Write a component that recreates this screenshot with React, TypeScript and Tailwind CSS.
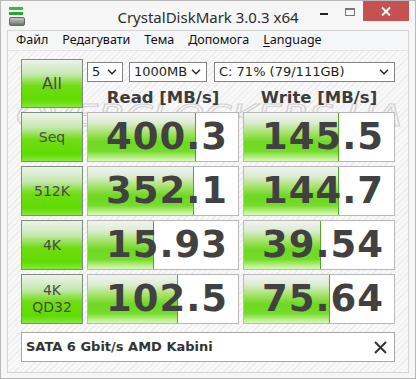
import React from 'react';

const rows = [
  { label: 'Seq', read: '400.3', readBar: 108, write: '145.5', writeBar: 95 },
  { label: '512K', read: '352.1', readBar: 106, write: '144.7', writeBar: 95 },
  { label: '4K', read: '15.93', readBar: 66, write: '39.54', writeBar: 77 },
  { label: '4K\nQD32', read: '102.5', readBar: 90, write: '75.64', writeBar: 86 },
];

const TestButton: React.FC<{ label: string; tall?: boolean }> = ({ label, tall }) => (
  <div
    className={`w-[62px] ${tall ? 'h-[49px] text-[16px]' : 'h-[50px] text-[14px]'} shrink-0 flex items-center justify-center border border-[#7e8e7c] bg-[linear-gradient(to_bottom,#eef2ec_0%,#c6e8b0_30%,#72dc14_55%,#5edc00_85%,#8ae640_100%)] text-[#4a4a4a] leading-[17px] text-center whitespace-pre-line font-['DejaVu_Sans',sans-serif]`}
  >
    {label}
  </div>
);

const ResultBox: React.FC<{ value: string; bar: number }> = ({ value, bar }) => (
  <div className="relative w-[152px] h-[50px] shrink-0 border border-[#b8b8b8] bg-white overflow-hidden">
    <div
      className="absolute left-0 top-0 bottom-0 border-r border-[#4fa82a] bg-[linear-gradient(to_bottom,#f2f3f1_0%,#dcecd2_20%,#a4e266_42%,#6ed822_60%,#74dc2a_80%,#b6ee82_92%,#d8f8bc_100%)]"
      style={{ width: bar }}
    />
    <div className="relative h-full flex items-center justify-end pr-[10px] text-[#414141] text-[37px] font-bold tracking-[1px] font-['DejaVu_Sans',sans-serif]">
      {value}
    </div>
  </div>
);

const Select: React.FC<{ value: string; width: string }> = ({ value, width }) => (
  <div className={`${width} h-[20px] shrink-0 border border-[#828282] bg-white flex items-center justify-between pl-[4px] pr-[5px] text-[13px] text-[#1e1e1e] font-['DejaVu_Sans',sans-serif]`}>
    <span>{value}</span>
    <svg width="10" height="6" viewBox="0 0 10 6" fill="none">
      <path d="M1 0.8 L5 4.8 L9 0.8" stroke="#222" strokeWidth="1.4" />
    </svg>
  </div>
);

export default function App() {
  return (
    <div className="w-[416px] h-[379px] bg-[#f6f6f6] border border-[#b9b9b9] flex flex-col font-['Noto_Sans',sans-serif] overflow-hidden">
      {/* title bar */}
      <div className="h-[29px] shrink-0 relative flex items-start">
        <div className="absolute left-[8px] top-[6px] w-[17px] h-[20px] flex flex-col gap-[2px]">
          <div className="h-[3px] w-[14px] bg-[#2fc23a]" />
          <div className="h-[3px] w-[14px] bg-[#28a832]" />
          <div className="h-[9px] w-[16px] rounded-[2px] bg-[linear-gradient(to_bottom,#c8c8c8,#707070)] border border-[#666] flex items-center justify-end pr-[2px]">
            <div className="w-[3px] h-[2px] bg-[#45e045]" />
          </div>
        </div>
        <div className="flex-1 text-center pt-[5px] text-[15px] text-[#2b2b2b]">CrystalDiskMark 3.0.3 x64</div>
        <div className="absolute right-[6px] top-0 flex items-start">
          <div className="w-[26px] h-[20px] flex items-center justify-center">
            <div className="w-[8px] h-[2px] bg-[#222] mt-[6px]" />
          </div>
          <div className="w-[26px] h-[20px] flex items-center justify-center">
            <div className="w-[10px] h-[8px] border border-[#777] border-t-2 mt-[2px]" />
          </div>
          <div className="w-[46px] h-[20px] bg-[#c75050] flex items-center justify-center">
            <svg width="10" height="9" viewBox="0 0 10 9">
              <path d="M1 0.5 L9 8.5 M9 0.5 L1 8.5" stroke="#fff" strokeWidth="2" />
            </svg>
          </div>
        </div>
      </div>

      {/* client */}
      <div className="mx-[6px] mb-[5px] flex-1 flex flex-col border border-[#d4d4d4]">
        {/* menu */}
        <div className="h-[20px] shrink-0 bg-[#f5f6f7] border-b border-[#e4e4e4] flex items-center pl-[1px] text-[12.5px] text-[#111]">
          <span className="px-[7px]">Файл</span>
          <span className="px-[7px]">Редагувати</span>
          <span className="px-[7px]">Тема</span>
          <span className="px-[7px]">Допомога</span>
          <span className="px-[7px]"><span className="underline underline-offset-2">L</span>anguage</span>
        </div>

        {/* content */}
        <div className="relative flex-1 bg-[repeating-linear-gradient(135deg,#f8f8f8_0px,#f8f8f8_3px,#ececec_3px,#ececec_4px)] pl-[13px] pt-[8px] flex flex-col gap-[4px]">
          <svg className="absolute left-[6px] top-[48px] pointer-events-none" width="392" height="34" viewBox="0 0 392 34">
            <text
              x="2"
              y="27"
              textLength="386"
              lengthAdjust="spacingAndGlyphs"
              fontFamily="DejaVu Sans, sans-serif"
              fontStyle="italic"
              fontSize="30"
              fill="none"
              stroke="#d0d0d0"
              strokeWidth="1"
            >
              OVERCLOCKERS.UA
            </text>
          </svg>

          <div className="relative flex gap-[4px]">
            <TestButton label="All" tall />
            <div className="flex flex-col h-[49px]">
              <div className="flex mt-[3px]">
                <Select value="5" width="w-[36px]" />
                <div className="w-[6px]" />
                <Select value="1000MB" width="w-[78px]" />
                <div className="w-[7px]" />
                <Select value="C: 71% (79/111GB)" width="w-[181px]" />
              </div>
              <div className="flex gap-[4px] mt-[6px] leading-[20px] text-[16.5px] font-bold text-[#3c3c3c] font-['DejaVu_Sans',sans-serif]">
                <div className="w-[152px] text-center">Read [MB/s]</div>
                <div className="w-[152px] text-center">Write [MB/s]</div>
              </div>
            </div>
          </div>

          {rows.map((r) => (
            <div key={r.label} className="relative flex gap-[4px]">
              <TestButton label={r.label} />
              <ResultBox value={r.read} bar={r.readBar} />
              <ResultBox value={r.write} bar={r.writeBar} />
            </div>
          ))}

          <div className="relative mt-[4px] w-[374px] h-[30px] border border-[#a8a8a8] bg-white flex items-center justify-between pl-[4px] pr-[7px]">
            <span className="text-[13px] font-bold text-[#333] font-['DejaVu_Sans',sans-serif]">SATA 6 Gbit/s AMD Kabini</span>
            <svg width="13" height="13" viewBox="0 0 13 13">
              <path d="M1 1 L12 12 M12 1 L1 12" stroke="#333" strokeWidth="2" />
            </svg>
          </div>
        </div>
      </div>
    </div>
  );
}
